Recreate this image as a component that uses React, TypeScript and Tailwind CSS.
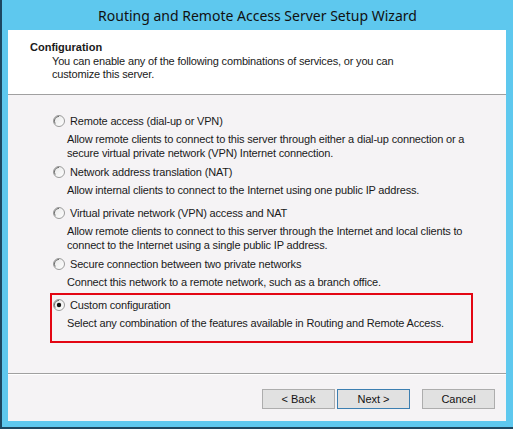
import React from 'react';

const Radio: React.FC<{ checked?: boolean }> = ({ checked }) => (
  <svg width="12" height="12" viewBox="0 0 12 12" className="shrink-0">
    <defs>
      <linearGradient id="rg" x1="0" y1="0" x2="1" y2="1">
        <stop offset="0" stopColor="#e6e6e6" />
        <stop offset="1" stopColor="#ffffff" />
      </linearGradient>
    </defs>
    <circle cx="6" cy="6" r="5.5" fill="url(#rg)" stroke="#9a9a9a" strokeWidth="1" />
    <path d="M2.2 8.6 A4.6 4.6 0 0 1 6 1.4" fill="none" stroke="#6e6e6e" strokeWidth="1" />
    {checked && <circle cx="6" cy="6" r="2.2" fill="#111" />}
  </svg>
);

type Opt = { title: string; lines: string[]; checked?: boolean };

const Option: React.FC<Opt & { className?: string }> = ({ title, lines, checked, className }) => (
  <div className={className}>
    <div className="flex items-center gap-[5px] h-[16px] leading-[16px]">
      <Radio checked={checked} />
      <span>{title}</span>
    </div>
    <div className="mt-[3px] pl-[14px] leading-[14px]">
      {lines.map((l) => (
        <div key={l}>{l}</div>
      ))}
    </div>
  </div>
);

const Btn: React.FC<{ label: string; primary?: boolean; className?: string }> = ({ label, primary, className }) => (
  <button
    className={`w-[73px] h-[20px] text-[11px] bg-[#e1e1e1] border ${primary ? 'border-[#3c7fb1]' : 'border-[#adadad]'} text-[#111] ${className ?? ''}`}
  >
    {label}
  </button>
);

export default function App() {
  return (
    <div className="w-[513px] h-[429px] bg-[#5ec8ee] border-l-2 border-b-2 border-[#1d4760] flex flex-col">
      {/* title bar */}
      <div className="h-[30px] flex items-center justify-center text-[14px] text-[#111] font-['Noto_Sans',sans-serif] pt-[1px]">
        Routing and Remote Access Server Setup Wizard
      </div>

      {/* dialog panel */}
      <div className="flex-1 ml-[6px] mr-[7px] mb-[6px] flex flex-col bg-[#f5f3f5] text-[#1a1a1a] text-[11px] tracking-[-0.17px] font-['Liberation_Sans',Arial,sans-serif]">
        {/* header */}
        <div className="h-[65px] bg-white border-b border-[#a0a0a0] pt-[10px] pl-[22px]">
          <div className="font-bold leading-[14px] tracking-normal">Configuration</div>
          <div className="mt-[1px] pl-[22px] leading-[13px]">
            <div>You can enable any of the following combinations of services, or you can</div>
            <div>customize this server.</div>
          </div>
        </div>

        {/* body */}
        <div className="flex-1 pl-[45px]">
          <Option
            className="mt-[18px]"
            title="Remote access (dial-up or VPN)"
            lines={[
              'Allow remote clients to connect to this server through either a dial-up connection or a',
              'secure virtual private network (VPN) Internet connection.',
            ]}
          />
          <Option
            className="mt-[4px]"
            title="Network address translation (NAT)"
            lines={['Allow internal clients to connect to the Internet using one public IP address.']}
          />
          <Option
            className="mt-[8px]"
            title="Virtual private network (VPN) access and NAT"
            lines={[
              'Allow remote clients to connect to this server through the Internet and local clients to',
              'connect to the Internet using a single public IP address.',
            ]}
          />
          <Option
            className="mt-[4px]"
            title="Secure connection between two private networks"
            lines={['Connect this network to a remote network, such as a branch office.']}
          />
          <div className="mt-[4px] -ml-[3px] w-[423px] h-[50px] border-2 border-[#e30613] pl-[1px] pt-[2px]">
            <Option
              checked
              title="Custom configuration"
              lines={['Select any combination of the features available in Routing and Remote Access.']}
            />
          </div>
        </div>

        {/* footer */}
        <div className="h-[48px] border-t border-[#a0a0a0] shadow-[inset_0_1px_0_#ffffff] flex items-start justify-end pt-[15px] pr-[11px] tracking-normal">
          <Btn label="< Back" />
          <Btn label="Next >" primary className="ml-[2px]" />
          <Btn label="Cancel" className="ml-[12px]" />
        </div>
      </div>
    </div>
  );
}
